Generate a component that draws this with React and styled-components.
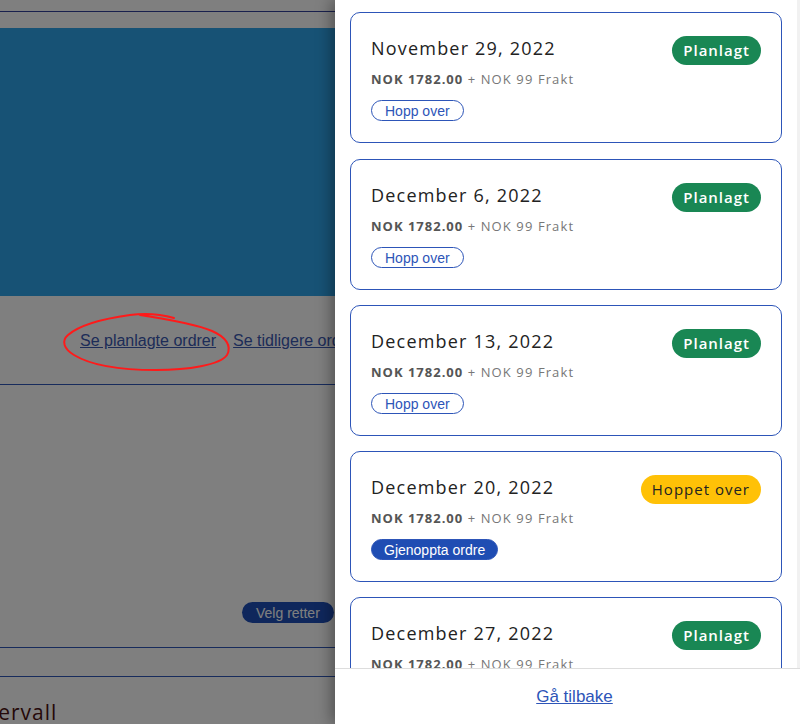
import styled, { createGlobalStyle } from "styled-components";

const GlobalStyle = createGlobalStyle`
    html, body {
        margin: 0;
        padding: 0;
        background: #fff;
        font-family: "Liberation Sans", Arial, sans-serif;
    }
`;

const orders = [
    { date: "November 29, 2022", status: "planned" },
    { date: "December 6, 2022", status: "planned" },
    { date: "December 13, 2022", status: "planned" },
    { date: "December 20, 2022", status: "skipped" },
    { date: "December 27, 2022", status: "planned" },
];

const OrderCard = ({ date, status }) => {
    const skipped = status === "skipped";

    return (
        <Card>
            <CardHead>
                <DateText>{date}</DateText>
                <Badge skipped={skipped}>{skipped ? "Hoppet over" : "Planlagt"}</Badge>
            </CardHead>
            <Price>
                <strong>NOK 1782.00</strong> + NOK 99 Frakt
            </Price>
            <ActionButton filled={skipped}>
                {skipped ? "Gjenoppta ordre" : "Hopp over"}
            </ActionButton>
        </Card>
    );
}

const App = () => {
    return (
        <Page>
            <GlobalStyle />

            <TopBar />
            <Hero />

            <LinkRow>
                <PageLink>Se planlagte ordrer</PageLink>
                <PageLink>Se tidligere ordrer</PageLink>
            </LinkRow>

            <Section>
                <PillButton>Velg retter</PillButton>
            </Section>

            <Spacer />
            <SectionTitle>Intervall</SectionTitle>

            <Backdrop />

            <Scribble viewBox="0 0 180 70" width="180" height="70">
                <path
                    d="M114 13 C100 9 84 8 70 10 C48 13 22 18 8 30 C1 36 4 44 14 50 C32 61 64 65 96 65 C128 65 160 60 167 50 C172 41 166 32 152 26 C136 19 106 14 80 10"
                    fill="none"
                    stroke="#ff1a1a"
                    strokeWidth="2"
                    strokeLinecap="round"
                />
            </Scribble>

            <Drawer>
                <ListArea>
                    <CardList>
                        {orders.map(o => (
                            <OrderCard key={o.date} date={o.date} status={o.status} />
                        ))}
                    </CardList>
                    <Track />
                </ListArea>

                <Footer>
                    <BackLink>Gå tilbake</BackLink>
                </Footer>
            </Drawer>
        </Page>
    );
}

export default App;


const Page = styled.div`
    position: relative;
    width: 800px;
    height: 724px;
    overflow: hidden;
    background: #fff;
`;

const TopBar = styled.div`
    height: 11px;
    border-bottom: 1px solid #33409a;
    margin-bottom: 16px;
`;

const Hero = styled.div`
    height: 268px;
    background: #2ea4ea;
`;

const LinkRow = styled.div`
    height: 89px;
    display: flex;
    align-items: center;
    gap: 17px;
    padding-left: 80px;
    padding-top: 2px;
    box-sizing: border-box;
    border-bottom: 1px solid #2f56b8;
`;

const PageLink = styled.a`
    font-size: 16px;
    color: #3a58b0;
    text-decoration: underline;
    white-space: nowrap;
`;

const Section = styled.div`
    height: 263px;
    display: flex;
    align-items: flex-end;
    padding: 0 0 24px 242px;
    box-sizing: border-box;
    border-bottom: 1px solid #2f56b8;
`;

const PillButton = styled.button`
    height: 21px;
    padding: 0 14px;
    border: none;
    border-radius: 11px;
    background: #1e4fb8;
    color: #fff;
    font-family: "Liberation Sans", Arial, sans-serif;
    font-size: 14px;
    white-space: nowrap;
`;

const Spacer = styled.div`
    height: 28px;
    border-bottom: 1px solid #2f56b8;
`;

const SectionTitle = styled.h2`
    margin: 23px 0 0 -31px;
    font-family: "Open Sans", sans-serif;
    font-weight: 400;
    font-size: 21px;
    line-height: 24px;
    letter-spacing: 1px;
    color: #4a1212;
    white-space: nowrap;
`;

const Backdrop = styled.div`
    position: absolute;
    inset: 0;
    background: rgba(0, 0, 0, 0.5);
`;

const Scribble = styled.svg`
    position: absolute;
    left: 60px;
    top: 305px;
`;

const Drawer = styled.div`
    position: absolute;
    top: 0;
    right: 0;
    width: 465px;
    height: 724px;
    background: #fff;
    display: flex;
    flex-direction: column;
    box-shadow: -4px 0 14px rgba(0, 0, 0, 0.35);
`;

const ListArea = styled.div`
    flex: 1;
    display: flex;
    min-height: 0;
`;

const CardList = styled.div`
    flex: 1;
    overflow: hidden;
    padding: 12px 15px 0 15px;
    display: flex;
    flex-direction: column;
    gap: 15px;
`;

const Track = styled.div`
    width: 3px;
    background: #f1f1f1;
`;

const Card = styled.div`
    flex-shrink: 0;
    height: 131px;
    box-sizing: border-box;
    border: 1px solid #2d55b8;
    border-radius: 10px;
    padding: 23px 20px 0 20px;
    display: flex;
    flex-direction: column;
    align-items: flex-start;

    &:first-child {
        margin-bottom: 1px;
    }
`;

const CardHead = styled.div`
    align-self: stretch;
    height: 29px;
    display: flex;
    align-items: center;
    justify-content: space-between;
`;

const DateText = styled.div`
    font-family: "Open Sans", sans-serif;
    font-size: 18px;
    line-height: 24px;
    letter-spacing: 1.2px;
    color: #222;
    margin-bottom: 5px;
`;

const Badge = styled.div`
    height: 29px;
    line-height: 29px;
    padding: 0 11px;
    border-radius: 15px;
    font-family: "Open Sans", sans-serif;
    font-size: 15px;
    font-weight: ${props => props.skipped ? 400 : 600};
    letter-spacing: 1px;
    background: ${props => props.skipped ? "#ffc107" : "#198754"};
    color: ${props => props.skipped ? "#222" : "#fff"};
`;

const Price = styled.div`
    margin-top: 6px;
    font-family: "Open Sans", sans-serif;
    font-size: 13px;
    line-height: 16px;
    letter-spacing: 1.1px;
    color: #777;

    strong {
        color: #555;
        font-weight: 700;
        letter-spacing: 1px;
    }
`;

const ActionButton = styled.button`
    margin-top: 13px;
    height: 21px;
    padding: 0 ${props => props.filled ? 12 : 13}px;
    border-radius: 11px;
    border: 1px solid #2d55b8;
    background: ${props => props.filled ? "#1f4db3" : "#fff"};
    color: ${props => props.filled ? "#fff" : "#2d55b8"};
    font-family: "Liberation Sans", Arial, sans-serif;
    font-size: 14px;
    white-space: nowrap;
`;

const Footer = styled.div`
    height: 56px;
    box-sizing: border-box;
    flex-shrink: 0;
    border-top: 1px solid #ddd;
    display: flex;
    align-items: center;
    justify-content: center;
    padding-left: 14px;
`;

const BackLink = styled.a`
    font-size: 17px;
    color: #2d55b8;
    text-decoration: underline;
`;
